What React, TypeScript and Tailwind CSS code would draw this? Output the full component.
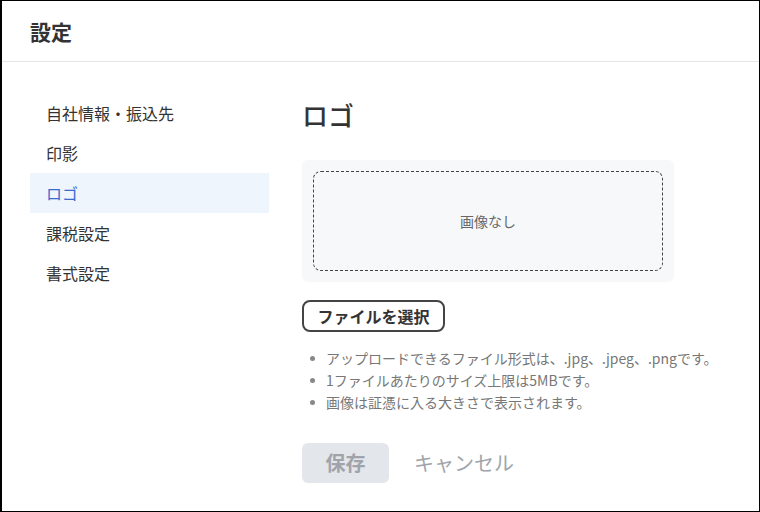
import React from "react";

const menu = ["自社情報・振込先", "印影", "ロゴ", "課税設定", "書式設定"];

const notes = [
  "アップロードできるファイル形式は、.jpg、.jpeg、.pngです。",
  "1ファイルあたりのサイズ上限は5MBです。",
  "画像は証憑に入る大きさで表示されます。",
];

export default function App() {
  return (
    <div
      className="w-[760px] h-[512px] bg-white border border-l-2 border-black flex flex-col text-[#333] overflow-hidden"
      style={{ fontFamily: '"Noto Sans CJK JP", "Noto Sans", sans-serif' }}
    >
      {/* Header */}
      <header className="h-[61px] shrink-0 border-b border-[#e6e6e6] flex items-center pl-[28px]">
        <h1 className="text-[21px] font-bold leading-none">設定</h1>
      </header>

      <div className="flex flex-1 pt-[31px]">
        {/* Sidebar */}
        <nav className="w-[239px] ml-[28px] flex flex-col">
          {menu.map((item) => {
            const active = item === "ロゴ";
            return (
              <div
                key={item}
                className={
                  "h-[40px] flex items-center pl-[16px] text-[16px] " +
                  (active ? "bg-[#eef5fd] text-[#3a6bcc]" : "text-[#333]")
                }
              >
                {item}
              </div>
            );
          })}
        </nav>

        {/* Main */}
        <main className="flex-1 ml-[33px] flex flex-col">
          <h2 className="text-[26px] font-medium leading-none mt-[5px] h-[34px] flex items-center">ロゴ</h2>

          <div className="mt-[28px] w-[372px] h-[122px] bg-[#f7f8fa] rounded-md p-[11px]">
            <div className="w-full h-full border border-dashed border-[#444] rounded-lg flex items-center justify-center">
              <span className="text-[14px] text-[#666]">画像なし</span>
            </div>
          </div>

          <button className="mt-[18px] w-[143px] h-[32px] border-2 border-[#444] rounded-lg text-[16px] font-bold text-[#333] flex items-center justify-center">
            ファイルを選択
          </button>

          <ul className="mt-[15px] flex flex-col">
            {notes.map((n) => (
              <li key={n} className="h-[22px] leading-[22px] flex items-center text-[14px] text-[#777]">
                <span className="w-[5px] h-[5px] rounded-full bg-[#888] ml-[8px] mr-[11px]" />
                {n}
              </li>
            ))}
          </ul>

          <div className="mt-[30px] flex items-center gap-[25px]">
            <button className="w-[87px] h-[40px] rounded-md bg-[#e3e6ea] text-[20px] font-bold text-[#a0a4aa]">
              保存
            </button>
            <button className="text-[20px] text-[#a0a4aa]">キャンセル</button>
          </div>
        </main>
      </div>
    </div>
  );
}
